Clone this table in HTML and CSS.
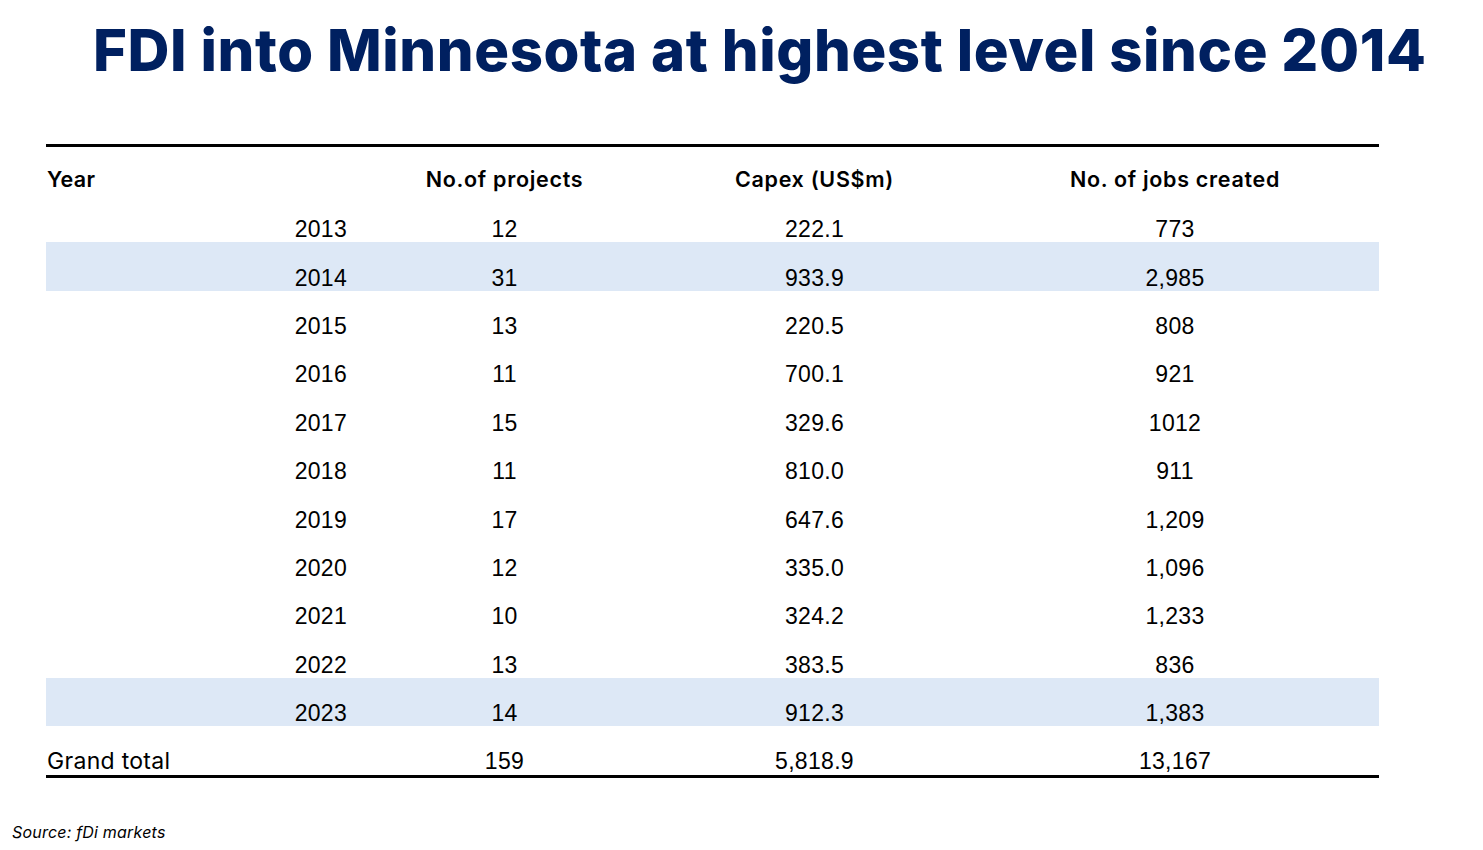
FILE: index.html
```html
<!DOCTYPE html>
<html>
<head>
<meta charset="utf-8">
<link rel="stylesheet" href="styles.css">
</head>
<body>
<div class="page">
  <h1 class="title">FDI into Minnesota at highest level since 2014</h1>
  <table class="fdi">
    <thead>
      <tr>
        <th class="c-year">Year</th>
        <th>No.of projects</th>
        <th>Capex (US$m)</th>
        <th>No. of jobs created</th>
      </tr>
    </thead>
    <tbody>
      <tr><td class="c-year">2013</td><td>12</td><td>222.1</td><td>773</td></tr>
      <tr class="hl"><td class="c-year">2014</td><td>31</td><td>933.9</td><td>2,985</td></tr>
      <tr><td class="c-year">2015</td><td>13</td><td>220.5</td><td>808</td></tr>
      <tr><td class="c-year">2016</td><td>11</td><td>700.1</td><td>921</td></tr>
      <tr><td class="c-year">2017</td><td>15</td><td>329.6</td><td>1012</td></tr>
      <tr><td class="c-year">2018</td><td>11</td><td>810.0</td><td>911</td></tr>
      <tr><td class="c-year">2019</td><td>17</td><td>647.6</td><td>1,209</td></tr>
      <tr><td class="c-year">2020</td><td>12</td><td>335.0</td><td>1,096</td></tr>
      <tr><td class="c-year">2021</td><td>10</td><td>324.2</td><td>1,233</td></tr>
      <tr><td class="c-year">2022</td><td>13</td><td>383.5</td><td>836</td></tr>
      <tr class="hl"><td class="c-year">2023</td><td>14</td><td>912.3</td><td>1,383</td></tr>
    </tbody>
    <tfoot>
      <tr><td class="c-label">Grand total</td><td>159</td><td>5,818.9</td><td>13,167</td></tr>
    </tfoot>
  </table>
  <p class="source">Source: fDi markets</p>
</div>
</body>
</html>
```
FILE: styles.css
```css
html, body {
  margin: 0;
  padding: 0;
  background: #ffffff;
}

.page {
  width: 1483px;
  height: 850px;
  position: relative;
  overflow: hidden;
}

.title {
  margin: 0;
  padding: 15px 0 0 93px;
  font-family: Inter, "Noto Sans", sans-serif;
  font-weight: 800;
  font-size: 58px;
  line-height: 70px;
  color: #002060;
  letter-spacing: 0.6px;
  white-space: nowrap;
}

.fdi {
  margin: 59px 0 0 46px;
  width: 1332px;
  border-collapse: collapse;
  table-layout: fixed;
  border-top: 3px solid #000;
  border-bottom: 3px solid #000;
}

.fdi th, .fdi td {
  padding: 0;
}

.fdi tr {
  height: 48.4px;
}

.fdi tfoot tr {
  height: 50px;
}

.fdi th, .fdi td {
  vertical-align: bottom;
  text-align: center;
  color: #000;
}

.fdi th {
  font-family: Inter, "Noto Sans", sans-serif;
  font-weight: 600;
  font-size: 21.5px;
  line-height: 26px;
  letter-spacing: 0.7px;
  padding-bottom: 2px;
}

.fdi th:nth-child(1) { width: 304px; }
.fdi th:nth-child(2) { width: 307px; }
.fdi th:nth-child(3) { width: 313px; }
.fdi th:nth-child(4) { width: 408px; }

.fdi th.c-year {
  text-align: left;
  padding-left: 1px;
  letter-spacing: 0.3px;
}

.fdi td {
  font-family: "Liberation Sans", Arial, sans-serif;
  font-size: 23px;
  line-height: 26px;
  letter-spacing: 0.3px;
  padding-bottom: 0;
}

.fdi td.c-year {
  text-align: right;
  padding-right: 4px;
}

.fdi td.c-label {
  text-align: left;
  padding-left: 1px;
  font-family: Inter, "Noto Sans", sans-serif;
  font-size: 23px;
  letter-spacing: 0.3px;
}

.fdi tfoot td {
  padding-bottom: 1px;
}

.fdi tr.hl td {
  background: #dde8f6;
}

.source {
  margin: 0;
  position: absolute;
  left: 12px;
  top: 822px;
  font-family: Inter, "Noto Sans", sans-serif;
  font-style: italic;
  font-size: 16px;
  line-height: 20px;
  letter-spacing: 0.2px;
  color: #000;
}
```
